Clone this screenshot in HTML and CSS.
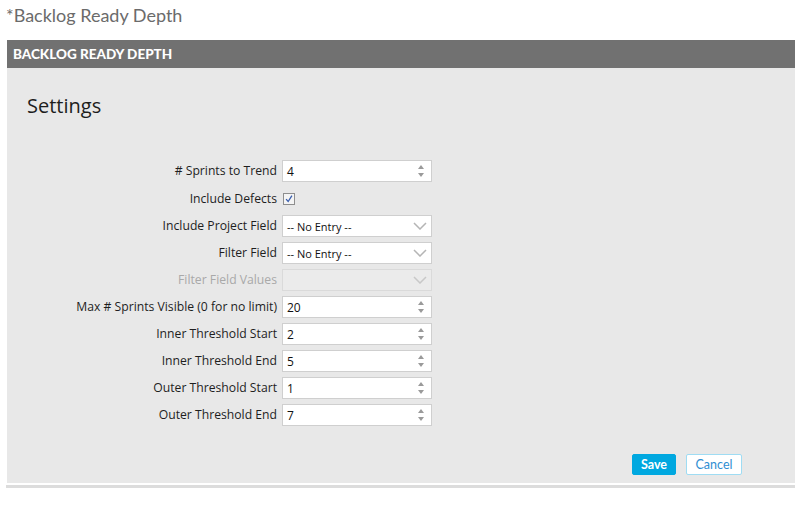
FILE: index.html
```html
<!DOCTYPE html>
<html>
<head>
<meta charset="utf-8">
<link rel="stylesheet" href="styles.css">
</head>
<body>
<div class="page-title">*Backlog Ready Depth</div>
<div class="panel">
  <div class="panel-header">BACKLOG READY DEPTH</div>
  <div class="panel-body">
    <h2 class="settings">Settings</h2>
    <div class="form">
      <div class="label"># Sprints to Trend</div>
      <div class="field number"><span>4</span><svg class="spin" width="8" height="14" viewBox="0 0 8 14"><path d="M4 1 L7 5 L1 5 Z M1 9 L7 9 L4 13 Z" fill="#9a9a9a"/></svg></div>

      <div class="label">Include Defects</div>
      <div class="checkwrap"><span class="checkbox"><svg width="12" height="12" viewBox="0 0 12 12"><path d="M2.5 6.2 L5 9 L9.5 2" fill="none" stroke="#3b5fae" stroke-width="1.6"/></svg></span></div>

      <div class="label">Include Project Field</div>
      <div class="field select"><span>-- No Entry --</span><svg class="chev" width="14" height="8" viewBox="0 0 14 8"><path d="M1 1 L7 7 L13 1" fill="none" stroke="#b5b5b5" stroke-width="1.5"/></svg></div>

      <div class="label">Filter Field</div>
      <div class="field select"><span>-- No Entry --</span><svg class="chev" width="14" height="8" viewBox="0 0 14 8"><path d="M1 1 L7 7 L13 1" fill="none" stroke="#b5b5b5" stroke-width="1.5"/></svg></div>

      <div class="label disabled">Filter Field Values</div>
      <div class="field select off"><span></span><svg class="chev" width="14" height="8" viewBox="0 0 14 8"><path d="M1 1 L7 7 L13 1" fill="none" stroke="#c8c8c8" stroke-width="1.5"/></svg></div>

      <div class="label">Max # Sprints Visible (0 for no limit)</div>
      <div class="field number"><span>20</span><svg class="spin" width="8" height="14" viewBox="0 0 8 14"><path d="M4 1 L7 5 L1 5 Z M1 9 L7 9 L4 13 Z" fill="#9a9a9a"/></svg></div>

      <div class="label">Inner Threshold Start</div>
      <div class="field number"><span>2</span><svg class="spin" width="8" height="14" viewBox="0 0 8 14"><path d="M4 1 L7 5 L1 5 Z M1 9 L7 9 L4 13 Z" fill="#9a9a9a"/></svg></div>

      <div class="label">Inner Threshold End</div>
      <div class="field number"><span>5</span><svg class="spin" width="8" height="14" viewBox="0 0 8 14"><path d="M4 1 L7 5 L1 5 Z M1 9 L7 9 L4 13 Z" fill="#9a9a9a"/></svg></div>

      <div class="label">Outer Threshold Start</div>
      <div class="field number"><span>1</span><svg class="spin" width="8" height="14" viewBox="0 0 8 14"><path d="M4 1 L7 5 L1 5 Z M1 9 L7 9 L4 13 Z" fill="#9a9a9a"/></svg></div>

      <div class="label">Outer Threshold End</div>
      <div class="field number"><span>7</span><svg class="spin" width="8" height="14" viewBox="0 0 8 14"><path d="M4 1 L7 5 L1 5 Z M1 9 L7 9 L4 13 Z" fill="#9a9a9a"/></svg></div>
    </div>
    <div class="actions">
      <button class="btn save">Save</button>
      <button class="btn cancel">Cancel</button>
    </div>
  </div>
</div>
<div class="rule"></div>
</body>
</html>
```

FILE: styles.css
```css
html, body {
  margin: 0;
  padding: 0;
  background: #ffffff;
}
body {
  width: 795px;
  height: 505px;
  overflow: hidden;
  font-family: "Open Sans", "Noto Sans", sans-serif;
}
.page-title {
  font-family: Lato, "Open Sans", sans-serif;
  font-size: 18px;
  color: #6b6b6b;
  padding: 4px 0 0 6px;
  height: 36px;
  line-height: 22px;
  box-sizing: border-box;
}
.panel {
  margin-left: 7px;
}
.panel-header {
  background: #717171;
  color: #ffffff;
  font-family: Lato, "Open Sans", sans-serif;
  font-weight: 900;
  font-size: 13.5px;
  height: 28px;
  line-height: 28px;
  padding-left: 6px;
  margin-top: 4px;
}
.panel-body {
  background: #e8e8e8;
  height: 415px;
  padding: 24px 0 0 20px;
  box-sizing: border-box;
  display: flex;
  flex-direction: column;
}
.settings {
  margin: 0;
  font-family: "Open Sans", sans-serif;
  font-weight: 400;
  font-size: 20px;
  line-height: 28px;
  color: #1d1d1d;
}
.form {
  margin-top: 40px;
  display: grid;
  grid-template-columns: 250px 150px;
  column-gap: 5px;
  row-gap: 5px;
  align-items: center;
}
.label {
  text-align: right;
  font-size: 12.2px;
  color: #1e1e1e;
  line-height: 22px;
  white-space: nowrap;
}
.label.disabled {
  color: #a9a9a9;
}
.field {
  height: 22px;
  box-sizing: border-box;
  background: #fff;
  border: 1px solid #cfcfcf;
  display: flex;
  align-items: center;
  justify-content: space-between;
  padding: 0 6px 0 4px;
  font-size: 12px;
  color: #111;
}
.field.select {
  font-size: 11px;
  padding-right: 4px;
}
.field.off {
  background: #ebebeb;
  border-color: #dadada;
}
.spin {
  display: block;
}
.chev {
  display: block;
}
.checkwrap {
  height: 23px;
  display: flex;
  align-items: center;
}
.checkbox {
  width: 12px;
  height: 12px;
  box-sizing: border-box;
  border: 1px solid #8e8e8e;
  background: #f4f4f4;
  margin-left: 1px;
  display: flex;
  align-items: center;
  justify-content: center;
}
.checkbox svg {
  display: block;
}
.actions {
  margin-top: 28px;
  display: flex;
  justify-content: flex-end;
  gap: 10px;
  padding-right: 53px;
}
.btn {
  height: 21px;
  box-sizing: border-box;
  font-family: Lato, "Open Sans", sans-serif;
  font-size: 12.5px;
  border-radius: 2px;
  padding: 0 4px;
  margin: 0;
  cursor: pointer;
}
.btn.save {
  background: #00a8e0;
  border: 1px solid #00a8e0;
  color: #fff;
  font-weight: 700;
  width: 44px;
}
.btn.cancel {
  background: #fff;
  border: 1px solid #9fdcf3;
  color: #2f8ed2;
  width: 56px;
}
.rule {
  margin: 2px 0 0 6px;
  height: 3px;
  background: #dcdcdc;
}
```
